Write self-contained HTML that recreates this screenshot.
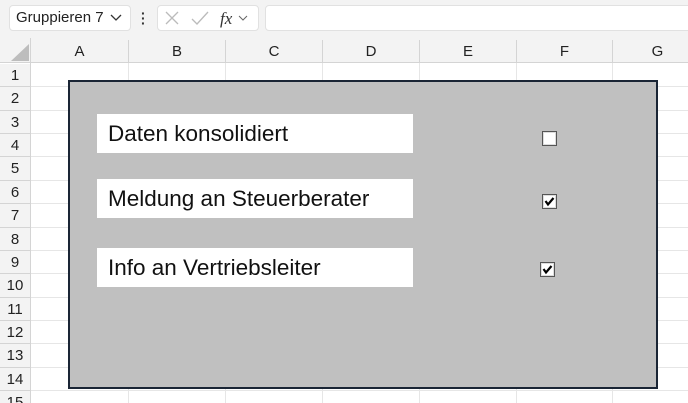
<!DOCTYPE html>
<html><head><meta charset="utf-8"><style>
*{margin:0;padding:0;box-sizing:border-box}
html,body{width:688px;height:403px;overflow:hidden}
body{background:#fff;font-family:"Liberation Sans",sans-serif;position:relative}
.a{position:absolute}
.top{left:0;top:0;width:688px;height:38px;background:#f3f3f3}
.pill{background:#fff;border:1px solid #e1e1e1;border-radius:4px;height:26px;top:5px}
.ch{top:40px;height:23px;background:#f3f3f3;border-bottom:1px solid #d4d4d4;font-size:15px;color:#222;text-align:center;line-height:24px}
.rh{left:0;width:31px;background:#f3f3f3;border-right:1px solid #d4d4d4;font-size:15px;color:#222;text-align:center}
.hl{height:1px;background:#e6e6e6;left:31px;width:657px}
.vl{width:1px;background:#e6e6e6;top:63px;height:340px}
.lbl{left:97px;width:316px;height:39px;background:#fff;font-size:22.5px;color:#111;padding-left:11px;line-height:39px;white-space:nowrap}
.cb{width:15px;height:15px;background:#fff;border:1px solid #555;box-shadow:0 0 0 1px #ddd inset}
</style></head><body>
<div class="a top"></div>
<div class="a pill" style="left:9px;width:122px;font-size:15px;line-height:24px;padding-left:6px;color:#222">Gruppieren 7 <svg width="12" height="8" style="margin-left:2px"><path d="M1 1 L6 6 L11 1" stroke="#333" fill="none" stroke-width="1.3"/></svg></div>
<div class="a" style="left:141px;top:11px;width:3px;height:14px;font-size:14px;font-weight:bold;line-height:5px;color:#333">·<br>·<br>·</div>
<div class="a pill" style="left:157px;width:102px"></div>
<svg class="a" style="left:163px;top:10px" width="90" height="18"><path d="M3 2 L15 14 M15 2 L3 14" stroke="#bbb" stroke-width="1.3"/><path d="M29 9 L34 14 L45 2" stroke="#bbb" stroke-width="1.3" fill="none"/><text x="57" y="14" font-family="Liberation Serif" font-style="italic" font-size="17" fill="#333">fx</text><path d="M76 6 L80 10 L84 6" stroke="#666" fill="none"/></svg>
<div class="a pill" style="left:265px;width:430px"></div>
<div class="a" style="left:0;top:38px;width:688px;height:2px;background:#f3f3f3"></div>
<div class="a ch" style="left:0;width:688px"></div>
<svg class="a" style="left:10px;top:44px" width="20" height="18"><path d="M19 0 L19 17 L1 17 Z" fill="#bdbdbd"/></svg>
<div class="a" style="left:30px;top:38px;width:1px;height:365px;background:#d4d4d4"></div>
<div class="a ch" style="left:31px;width:97px">A</div>
<div class="a ch" style="left:128px;width:97px;border-left:1px solid #d4d4d4">B</div>
<div class="a ch" style="left:225px;width:97px;border-left:1px solid #d4d4d4">C</div>
<div class="a ch" style="left:322px;width:97px;border-left:1px solid #d4d4d4">D</div>
<div class="a ch" style="left:419px;width:97px;border-left:1px solid #d4d4d4">E</div>
<div class="a ch" style="left:516px;width:96px;border-left:1px solid #d4d4d4">F</div>
<div class="a ch" style="left:612px;width:90px;border-left:1px solid #d4d4d4">G</div>
<div class="a vl" style="left:128px"></div><div class="a vl" style="left:225px"></div><div class="a vl" style="left:322px"></div><div class="a vl" style="left:419px"></div><div class="a vl" style="left:516px"></div><div class="a vl" style="left:612px"></div>
<div id="rows"></div>
<script>
var h='';for(var i=0;i<15;i++){var t=64+i*23.36;h+='<div class="a rh" style="top:'+t+'px;height:23.36px;line-height:23px;border-bottom:1px solid #d4d4d4">'+(i+1)+'</div><div class="a hl" style="top:'+(t+22.4)+'px"></div>';}document.getElementById('rows').innerHTML=h;
</script>
<div class="a" style="left:68px;top:80px;width:590px;height:309px;background:#c0c0c0;border:2px solid #1a2535"></div>
<div class="a lbl" style="top:114px">Daten konsolidiert</div>
<div class="a lbl" style="top:179px">Meldung an Steuerberater</div>
<div class="a lbl" style="top:248px">Info an Vertriebsleiter</div>
<div class="a cb" style="left:542px;top:131px"></div>
<div class="a cb" style="left:542px;top:194px"><svg width="13" height="13" style="position:absolute;left:0;top:0"><path d="M2.5 6 L5 9.5 L10.5 3" stroke="#000" stroke-width="2.2" fill="none"/></svg></div>
<div class="a cb" style="left:540px;top:262px"><svg width="13" height="13" style="position:absolute;left:0;top:0"><path d="M2.5 6 L5 9.5 L10.5 3" stroke="#000" stroke-width="2.2" fill="none"/></svg></div>
</body></html>
